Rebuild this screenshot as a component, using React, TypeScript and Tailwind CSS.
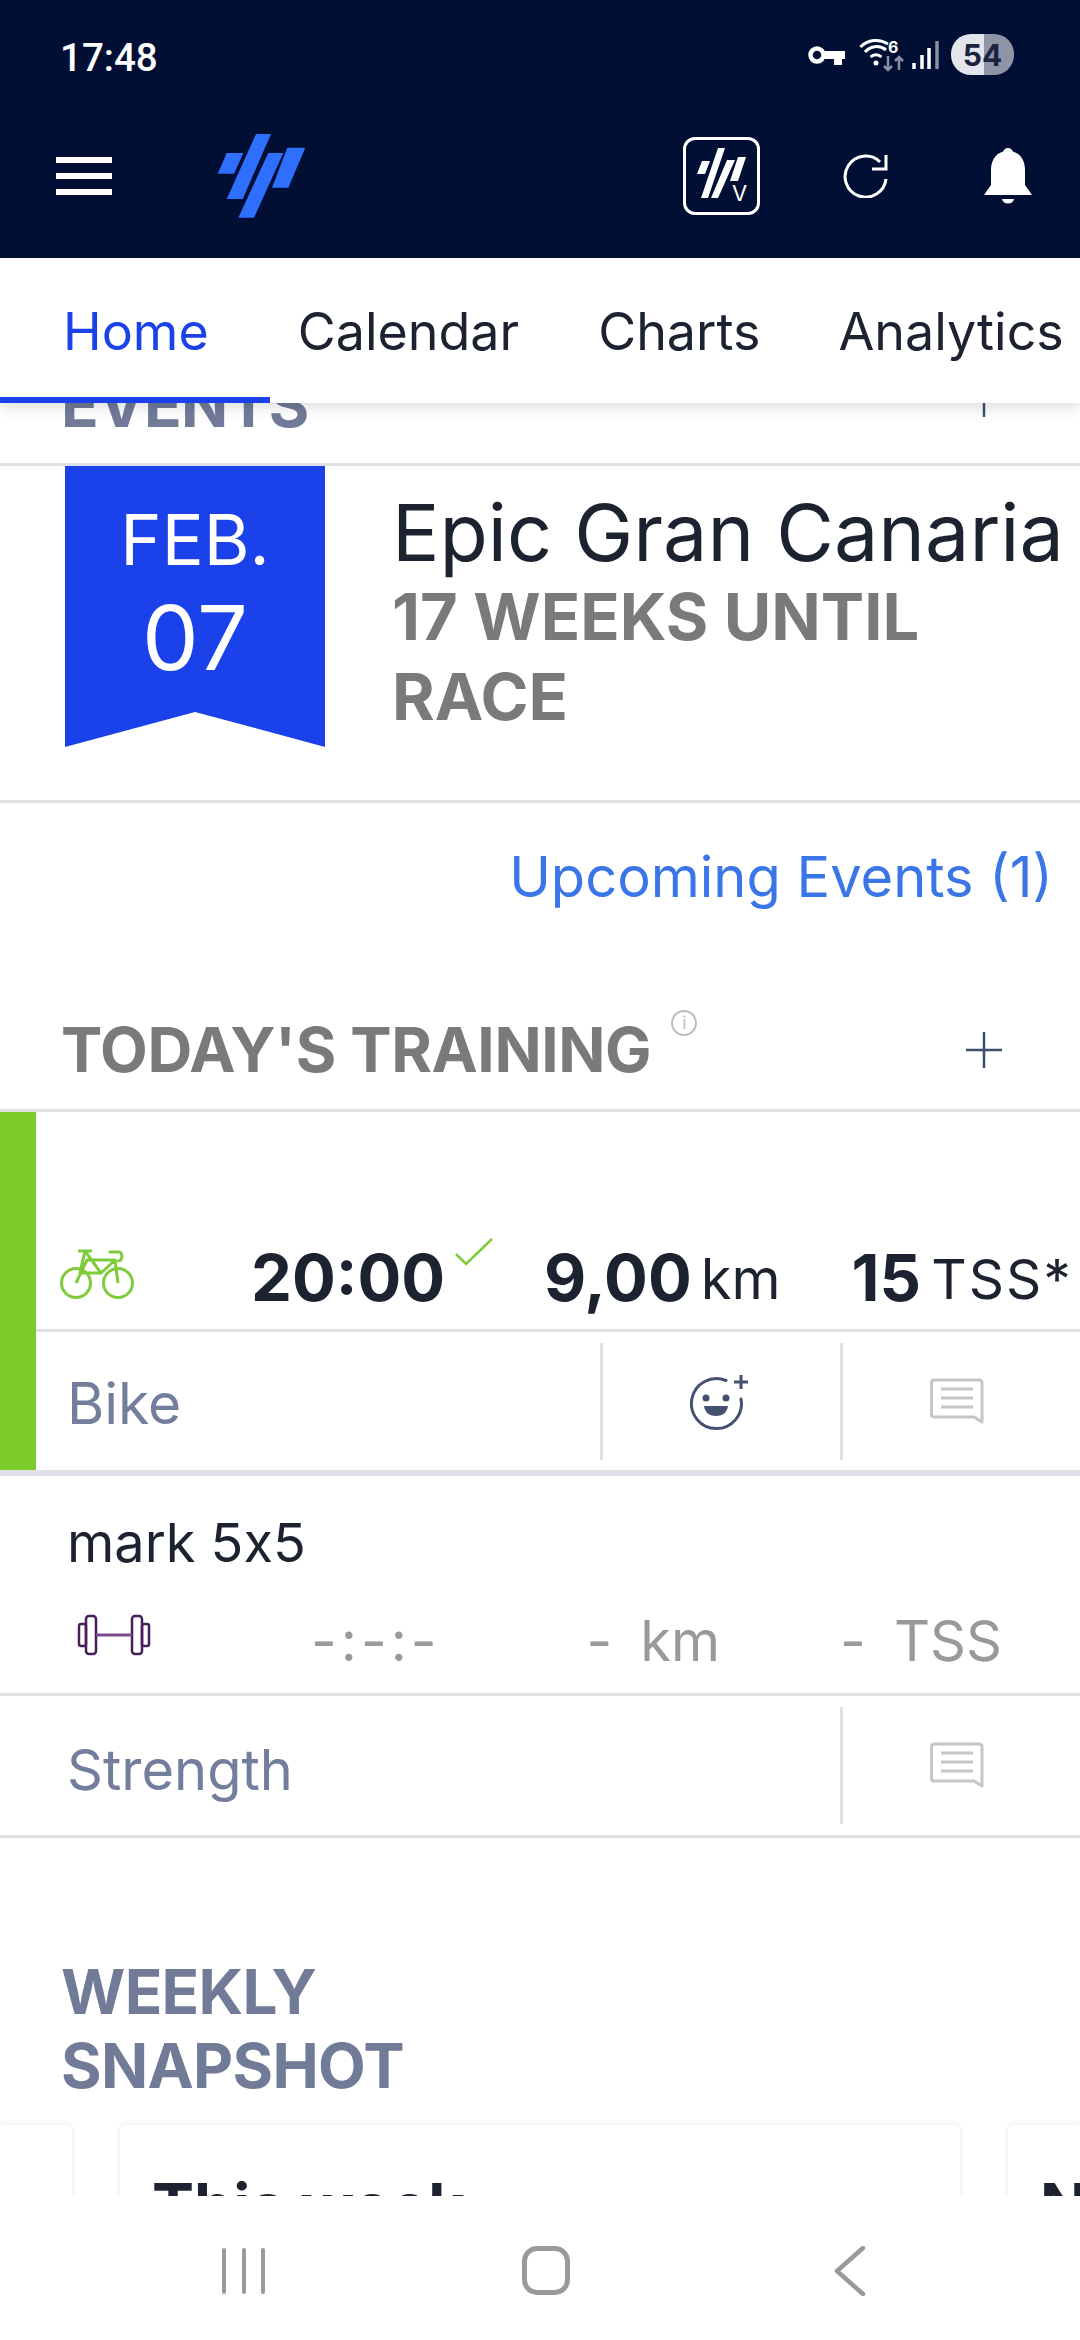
function Plus() {
  return (
    <svg width="38" height="38" viewBox="0 0 38 38" className="shrink-0">
      <path d="M19 1V37M1 19H37" stroke="#3f4c6b" strokeWidth="2.5" fill="none" />
    </svg>
  );
}

function Comment() {
  return (
    <svg width="54" height="48" viewBox="0 0 54 48" fill="none" className="shrink-0">
      <path d="M4 2H49C51 2 52 3 52 5V44L44 39H4C2.500 39 1.500 38 1.500 36V5C1.500 3 2.500 2 4 2Z" stroke="#c6c6c6" strokeWidth="3" strokeLinejoin="round" />
      <path d="M11 11H43M11 20H43M11 29H43" stroke="#c6c6c6" strokeWidth="3" />
    </svg>
  );
}

function Smile() {
  return (
    <svg width="66" height="60" viewBox="0 0 66 60" fill="none" className="shrink-0">
      <path d="M37 8.500A25 25 0 1 0 52 27" stroke="#43506e" strokeWidth="3" strokeLinecap="round" />
      <circle cx="17" cy="26" r="3.500" fill="#43506e" />
      <circle cx="37" cy="26" r="3.500" fill="#43506e" />
      <path d="M15 34H39C38 41 33 44 27 44C21 44 16 41 15 34Z" fill="#43506e" />
      <path d="M52 3V17M45 10H59" stroke="#43506e" strokeWidth="3" />
    </svg>
  );
}

function Bike() {
  return (
    <svg width="74" height="52" viewBox="0 0 74 52" fill="none" stroke="#7fcb3c" strokeWidth="3" className="shrink-0">
      <circle cx="16" cy="34" r="14.500" />
      <circle cx="58" cy="34" r="14.500" />
      <path d="M18 2H32M25 2L20 24H41L25 2ZM26 11H55L41 24M16 34L27 11M55 11L58 34" strokeLinejoin="round" />
      <path d="M50 3H59C63 3 63 12 58 12" strokeLinecap="round" />
    </svg>
  );
}

function Dumbbell() {
  return (
    <svg width="74" height="42" viewBox="0 0 74 42" fill="none" stroke="#4a1e5a" strokeWidth="2.500" className="shrink-0">
      <rect x="9" y="2" width="10" height="38" rx="3" />
      <rect x="2" y="10" width="7" height="22" rx="2" />
      <rect x="55" y="2" width="10" height="38" rx="3" />
      <rect x="65" y="10" width="7" height="22" rx="2" />
      <path d="M19 21H55" stroke="#7a4a8a" strokeWidth="3" />
    </svg>
  );
}

function Logo() {
  return (
    <svg width="90" height="86" viewBox="216 132 90 86" fill="#2f6fff" className="shrink-0">
      <path d="M226.700 152H243.300L234 172.700H217.700Z" />
      <path d="M256 133H271L242.700 198H226.700Z" />
      <path d="M268.300 152H283.300L254 216.700H238.300Z" />
      <path d="M287.300 146.700H305.300L288.300 186.700H272Z" />
    </svg>
  );
}

function StatusIcons() {
  return (
    <svg width="137" height="36" viewBox="0 0 137 36" fill="none" className="shrink-0">
      <circle cx="9" cy="18" r="6.500" stroke="#fff" strokeWidth="4.500" />
      <path d="M14 14H37V22H34V28H26V22H14Z" fill="#fff" />
      <path d="M52.400 10A22 22 0 0 1 80 7M57 15A15 15 0 0 1 78 13M62.500 20A8 8 0 0 1 73.500 20" stroke="#fff" strokeWidth="3" />
      <circle cx="68" cy="26" r="2.500" fill="#fff" />
      <text x="80" y="16" fontSize="16" fontWeight="700" fill="#fff">6</text>
      <path d="M80 19V33M76 29L80 33L84 29M91 33V20M87 24L91 20L95 24" stroke="#8a90a2" strokeWidth="2.500" />
      <path d="M106 32V26" stroke="#fff" strokeWidth="3.500" />
      <path d="M114 32V18" stroke="#fff" strokeWidth="3.500" />
      <path d="M121 32V11" stroke="#fff" strokeWidth="3.500" />
      <path d="M129 32V4" stroke="#8a90a2" strokeWidth="3.500" />
    </svg>
  );
}

function AppMark() {
  return (
    <div className="flex h-[78px] w-[77px] shrink-0 items-center justify-center rounded-[12px] border-[3px] border-white">
      <svg width="56" height="62" viewBox="0 0 56 62" fill="#fff">
        <path d="M6 16H14L9 29H1Z" />
        <path d="M22 3H29L12 53H5Z" />
        <path d="M31 15H39L22 53H15Z" />
        <path d="M42 12H50L42 36H34Z" />
      </svg>
      <span className="-ml-[20px] mt-[34px] text-[22px] leading-none text-white">V</span>
    </div>
  );
}

function Refresh() {
  return (
    <svg width="48" height="48" viewBox="0 0 48 48" fill="none" stroke="#fff" strokeWidth="3" className="shrink-0">
      <path d="M38 12A20.500 20.500 0 1 0 44 29" />
      <path d="M44 5V19H30" />
    </svg>
  );
}

function Bell() {
  return (
    <svg width="48" height="58" viewBox="0 0 48 58" fill="#fff" className="shrink-0">
      <circle cx="24" cy="6" r="5" />
      <path d="M24 4C35 4 41 12 41 23V38L48 48H0L7 38V23C7 12 13 4 24 4Z" />
      <path d="M18 52H30C29 58 19 58 18 52Z" />
    </svg>
  );
}

function Ribbon() {
  return (
    <div className="flex h-[281px] w-[260px] shrink-0 flex-col items-center bg-[#1a41ea] pt-[32px] text-white [clip-path:polygon(0_0,100%_0,100%_100%,50%_87.5%,0_100%)]">
      <div className="text-[70px] leading-[84px]">FEB.</div>
      <div className="mt-[6px] text-[90px] leading-[100px]">07</div>
    </div>
  );
}

export default function App() {
  return (
    <div className="flex h-[2340px] w-[1080px] flex-col overflow-hidden bg-white [font-family:Inter,sans-serif]">
      <header className="h-[258px] shrink-0 bg-[#000f33] text-white">
        <div className="flex h-[110px] items-start pl-[60px] pr-[66px] pt-[34px]">
          <span className="mt-[3px] text-[38.5px] font-medium leading-[42px] [font-family:Roboto,sans-serif]">17:48</span>
          <div className="ml-auto flex items-center gap-[6px]">
            <StatusIcons />
            <div className="flex h-[41px] w-[63px] items-center justify-center rounded-[20px] bg-[linear-gradient(90deg,#e3e5ea_0,#e3e5ea_52%,#8f95a6_52%,#8f95a6_100%)] text-[30px] font-bold leading-none text-[#1a2340]">
              54
            </div>
          </div>
        </div>
        <div className="flex items-center pl-[56px] pr-[48px] pt-[23px]">
          <div className="flex h-[38px] w-[56px] flex-col justify-between">
            <div className="h-[6px] bg-white" />
            <div className="h-[6px] bg-white" />
            <div className="h-[6px] bg-white" />
          </div>
          <div className="ml-[104px]"><Logo /></div>
          <div className="ml-auto"><AppMark /></div>
          <div className="-mt-[5px] ml-[82px]"><Refresh /></div>
          <div className="ml-[94px]"><Bell /></div>
        </div>
      </header>

      <nav className="relative z-10 flex h-[145px] shrink-0 items-start bg-white pt-[44px] text-[52px] leading-[60px] text-[#1c2230] shadow-[0_4px_14px_rgba(0,0,0,0.14)]">
        <div className="absolute bottom-0 left-0 h-[6px] w-[270px] bg-[#1a41ea]" />
        <span className="ml-[63px] text-[#1a41ea]">Home</span>
        <span className="ml-[89px]">Calendar</span>
        <span className="ml-[79px]">Charts</span>
        <span className="ml-[78px] whitespace-nowrap">Analytics</span>
      </nav>

      <main className="min-h-0 flex-1 overflow-hidden">
        <div className="-mt-[35px] flex h-[98px] items-start justify-between border-b-[3px] border-[#dfe0e5] pl-[61px] pr-[77px]">
          <h2 className="text-[62px] font-bold leading-[74px] tracking-[-0.5px] text-[#717b98]">EVENTS</h2>
          <div className="mt-[12px]"><Plus /></div>
        </div>

        <div className="flex h-[337px] border-b-[3px] border-[#dfe0e5] pl-[65px]">
          <Ribbon />
          <div className="ml-[67px] min-w-0">
            <div className="mt-[26px] whitespace-nowrap text-[79px] leading-[80px] text-[#1c2230]">Epic Gran Canaria</div>
            <div className="mt-[5px] text-[65px] font-bold leading-[80px] text-[#7a7a7a]">
              17 WEEKS UNTIL
              <br />
              RACE
            </div>
          </div>
        </div>

        <div className="pr-[27px] pt-[41px] text-right text-[56px] leading-[66px] text-[#3b76e8]">Upcoming Events (1)</div>

        <div className="mt-[103px] flex h-[99px] items-start border-b-[3px] border-[#dfe0e5] pl-[61px] pr-[77px]">
          <h2 className="text-[62px] font-bold leading-[74px] tracking-[-0.4px] text-[#7a7a7a]">TODAY'S TRAINING</h2>
          <div className="ml-[20px] mt-[-3px] flex h-[26px] w-[26px] items-center justify-center rounded-full border-2 border-[#bdbdbd] text-[17px] leading-none text-[#bdbdbd]">i</div>
          <div className="ml-auto mt-[18px]"><Plus /></div>
        </div>

        <div className="flex h-[364px] border-b-[6px] border-[#dfe0e8]">
          <div className="w-[36px] shrink-0 bg-[#7bcb2a]" />
          <div className="min-w-0 flex-1">
            <div className="flex h-[220px] items-end border-b-[3px] border-[#dfe0e5] pb-[15px] text-[#1c2230]">
              <div className="mb-[13px] ml-[24px]"><Bike /></div>
              <span className="ml-[117px] w-[190px] text-[65px] font-bold leading-[72px]">20:00</span>
              <svg width="40" height="30" viewBox="0 0 40 30" fill="none" stroke="#7fcb3c" strokeWidth="2.500" className="mb-[46px] ml-[13px]">
                <path d="M2 16L12 26L38 1" />
              </svg>
              <span className="ml-[50px] text-[65px] font-bold leading-[72px]">9,00</span>
              <span className="ml-[9px] text-[56px] leading-[70px]">km</span>
              <span className="ml-[71px] text-[65px] font-bold leading-[72px]">15</span>
              <span className="ml-[10px] whitespace-nowrap text-[55px] leading-[70px] tracking-[2px]">TSS*</span>
            </div>
            <div className="flex h-[139px] items-center">
              <span className="ml-[31px] mt-[5px] text-[57px] leading-[60px] text-[#737d9c]">Bike</span>
              <div className="ml-auto h-[117px] w-[3px] bg-[#dfe0e5]" />
              <div className="flex w-[237px] items-center justify-center"><Smile /></div>
              <div className="h-[117px] w-[3px] bg-[#dfe0e5]" />
              <div className="flex w-[237px] justify-center pr-[10px]"><Comment /></div>
            </div>
          </div>
        </div>

        <div className="flex h-[220px] flex-col border-b-[3px] border-[#dfe0e5]">
          <div className="pl-[67px] pt-[35px] text-[54px] leading-[64px] text-[#1c2230] [font-feature-settings:'calt'_0]">mark 5x5</div>
          <div className="flex items-center pt-[34px] text-[56px] leading-[64px] text-[#999999]">
            <div className="-mt-[12px] ml-[77px]"><Dumbbell /></div>
            <span className="ml-[160px] tracking-[4px] [font-feature-settings:'calt'_0]">-:-:-</span>
            <span className="ml-[146px]">-</span>
            <span className="ml-[28px]">km</span>
            <span className="ml-[120px]">-</span>
            <span className="ml-[28px]">TSS</span>
          </div>
        </div>

        <div className="flex h-[142px] items-center border-b-[3px] border-[#dfe0e5]">
          <span className="ml-[67px] mt-[8px] text-[56px] leading-[64px] text-[#737d9c]">Strength</span>
          <div className="ml-auto h-[117px] w-[3px] bg-[#dfe0e5]" />
          <div className="flex w-[237px] justify-center pr-[10px]"><Comment /></div>
        </div>

        <h2 className="pl-[61px] pt-[117px] text-[62px] font-bold leading-[74px] tracking-[-0.7px] text-[#717b98]">
          WEEKLY
          <br />
          SNAPSHOT
        </h2>

        <div className="mt-[22px] flex gap-[48px]">
          <div className="h-[200px] w-[72px] shrink-0 rounded-r-[6px] bg-white shadow-[0_0_6px_rgba(0,0,0,0.1)]" />
          <div className="h-[200px] w-[840px] shrink-0 rounded-[6px] bg-white pl-[32px] pt-[46px] text-[63px] font-bold leading-[70px] text-[#1c2230] shadow-[0_0_6px_rgba(0,0,0,0.1)]">
            This week
          </div>
          <div className="h-[200px] w-[72px] shrink-0 overflow-hidden rounded-l-[6px] bg-white pl-[32px] pt-[46px] text-[63px] font-bold leading-[70px] text-[#1c2230] shadow-[0_0_6px_rgba(0,0,0,0.1)]">
            N
          </div>
        </div>
      </main>

      <footer className="relative z-10 flex h-[144px] shrink-0 items-start bg-white pt-[50px]">
        <svg width="44" height="46" viewBox="0 0 44 46" fill="none" stroke="#9a9a9a" strokeWidth="4" strokeLinecap="round" className="ml-[222px] mt-[2px]">
          <path d="M2 2V44M22 2V44M41 2V44" />
        </svg>
        <div className="ml-[256px] h-[49px] w-[48px] rounded-[15px] border-[5px] border-[#9a9a9a]" />
        <svg width="32" height="50" viewBox="0 0 32 50" fill="none" stroke="#9a9a9a" strokeWidth="4.500" strokeLinecap="round" strokeLinejoin="round" className="ml-[264px]">
          <path d="M29 2L3 25L29 48" />
        </svg>
      </footer>
    </div>
  );
}
